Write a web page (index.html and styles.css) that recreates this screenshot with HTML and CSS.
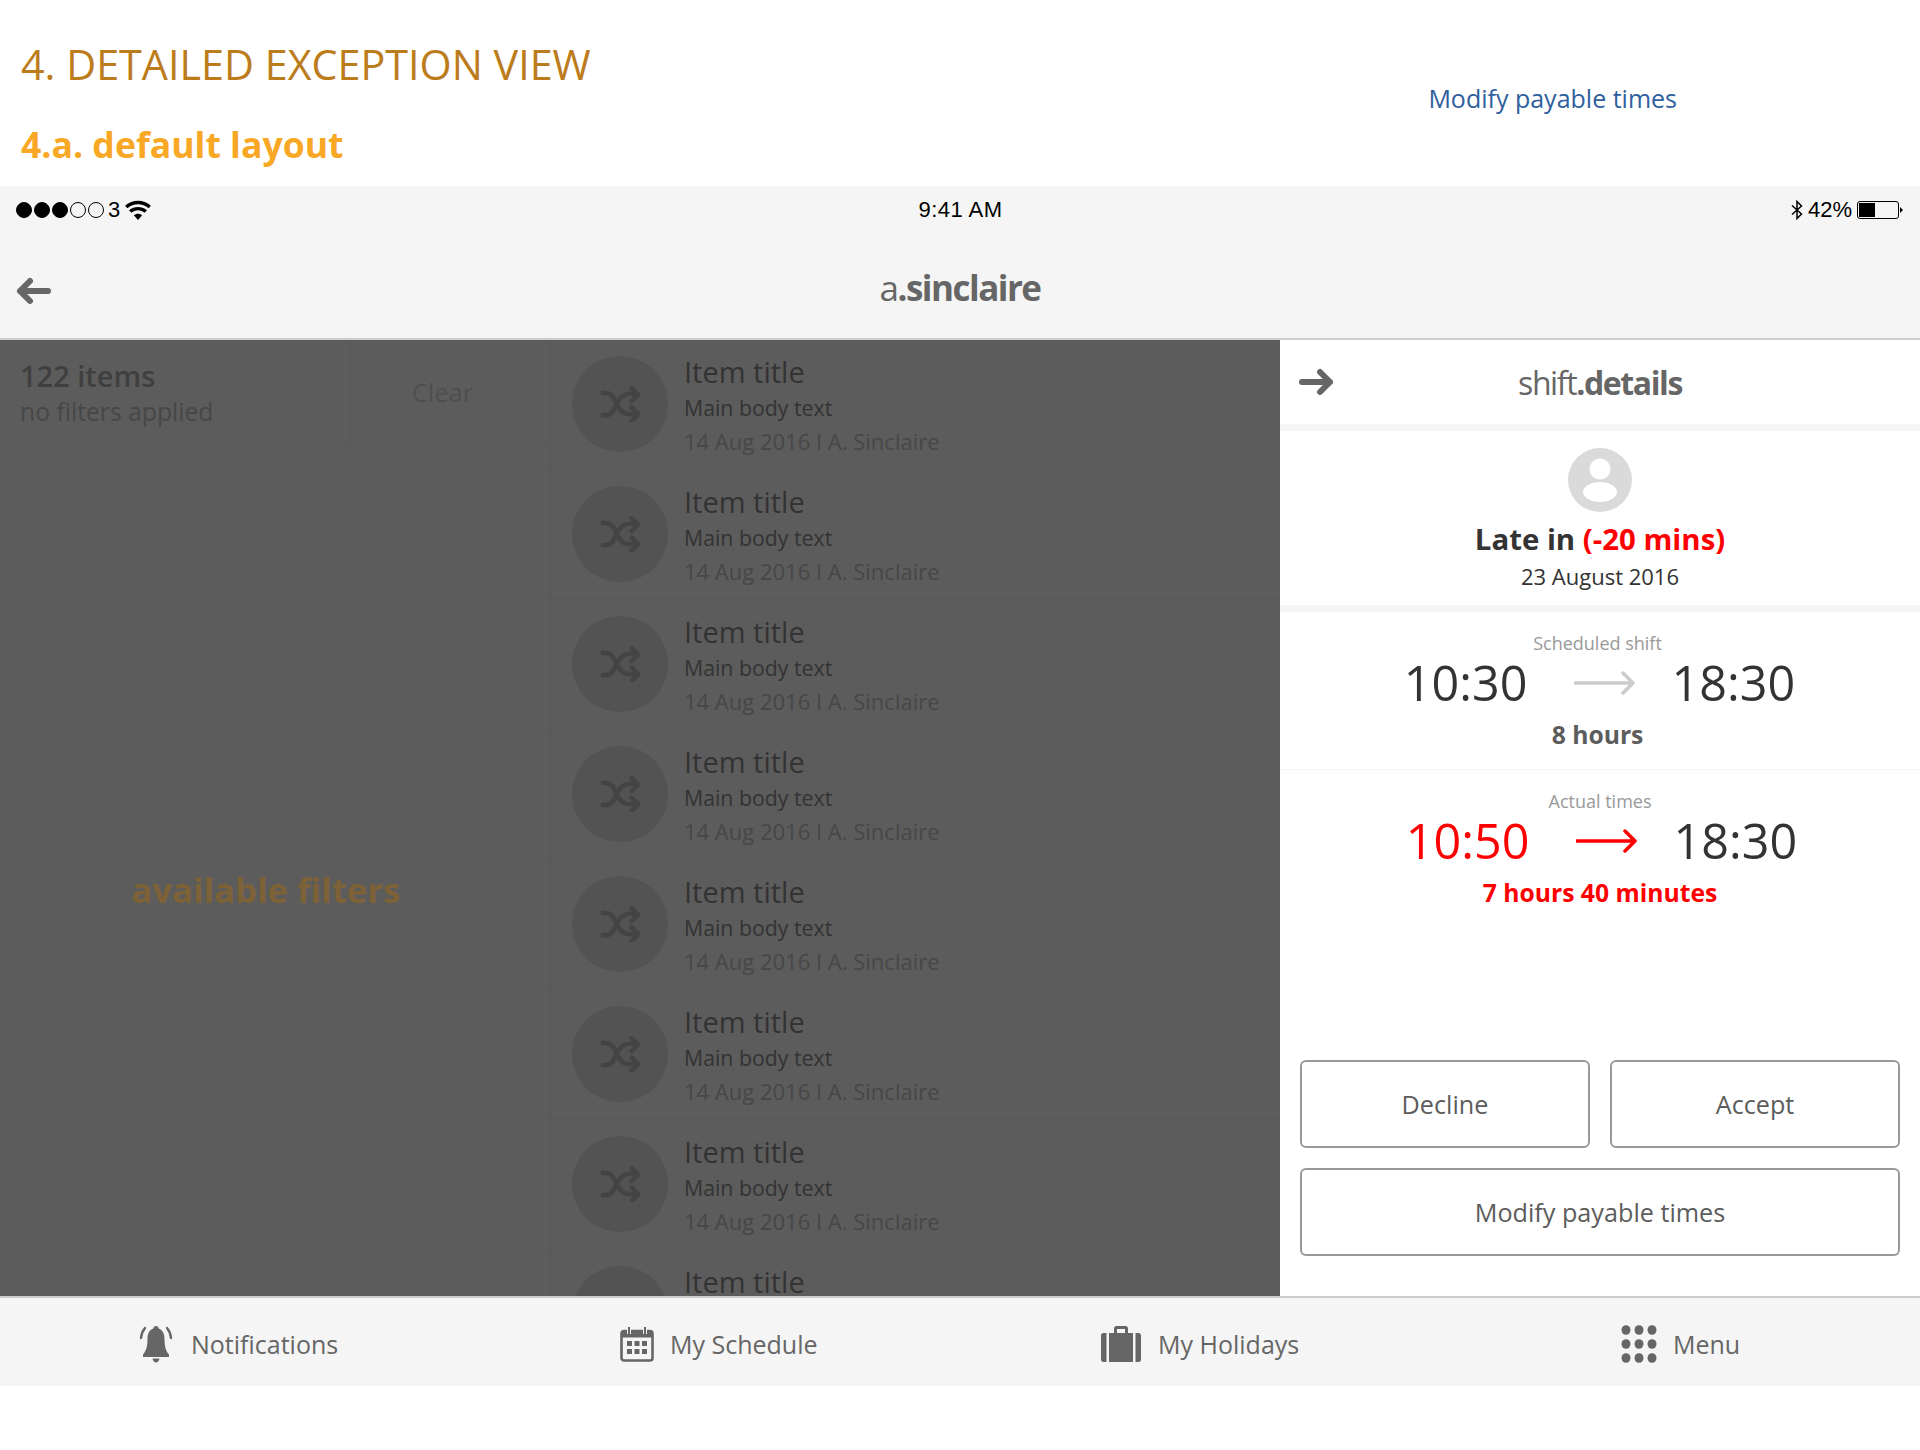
FILE: index.html
```html
<!DOCTYPE html>
<html lang="en">
<head>
  <meta charset="UTF-8" />
  <title>Detailed exception view</title>
  <link rel="stylesheet" href="styles.css">
</head>
<body>
  <header class="doc-head">
    <div class="doc-titles">
      <h1>4. DETAILED EXCEPTION VIEW</h1>
      <h2>4.a. default layout</h2>
    </div>
    <a class="doc-link">Modify payable times</a>
  </header>

  <div class="app">
    <div class="status-bar">
      <div class="status-left">
        <span class="dot on"></span><span class="dot on"></span><span class="dot on"></span><span class="dot"></span><span class="dot"></span>
        <span class="carrier">3</span>
        <svg class="wifi" width="28" height="21" viewBox="0 0 26 20"><path d="M13 19 9 14.500c2.300-2 5.700-2 8 0zM6.700 12.200 4.500 9.700c4.800-4.200 12.200-4.200 17 0l-2.200 2.500c-3.600-3.200-9-3.200-12.600 0zM2.900 7.900.7 5.400c7-6.200 17.600-6.200 24.600 0l-2.200 2.500C17.300 2.800 8.700 2.800 2.900 7.900z" fill="#000"/></svg>
      </div>
      <div class="status-time">9:41 AM</div>
      <div class="status-right">
        <svg width="12" height="20" viewBox="0 0 12 20"><path d="M1 5.500 10.500 14 6 18.500v-17L10.500 6 1 14.500" fill="none" stroke="#000" stroke-width="1.500"/></svg>
        <span>42%</span>
        <div class="battery"><div class="battery-fill"></div></div>
      </div>
    </div>

    <nav class="top-nav">
      <svg class="nav-arrow" width="36" height="28" viewBox="0 0 36 28"><path d="M32 14H4M14 4 4 14l10 10" fill="none" stroke="#666" stroke-width="6" stroke-linecap="round" stroke-linejoin="round"/></svg>
      <div class="nav-title">a<b>.sinclaire</b></div>
    </nav>

    <main class="main">
      <aside class="filters">
        <div class="filters-head">
          <div class="filters-count">
            <div class="count">122 items</div>
            <div class="applied">no filters applied</div>
          </div>
          <div class="clear">Clear</div>
        </div>
        <div class="filters-body">available filters</div>
      </aside>

      <section class="list" id="list"></section>

      <aside class="panel">
        <div class="panel-head">
          <svg class="panel-arrow" width="36" height="28" viewBox="0 0 36 28"><path d="M4 14h28M22 4l10 10-10 10" fill="none" stroke="#666" stroke-width="6" stroke-linecap="round" stroke-linejoin="round"/></svg>
          <div class="panel-title">shift<b>.details</b></div>
        </div>

        <div class="person">
          <svg width="64" height="64" viewBox="0 0 64 64"><circle cx="32" cy="32" r="32" fill="#dadada"/><circle cx="32" cy="21" r="10.500" fill="#fff"/><ellipse cx="32" cy="44" rx="17" ry="10" fill="#fff"/></svg>
          <div class="late">Late in <span class="red">(-20 mins)</span></div>
          <div class="date">23 August 2016</div>
        </div>

        <div class="times scheduled">
          <div class="times-label">Scheduled shift</div>
          <div class="times-row">
            <span>10:30</span>
            <svg width="62" height="24" viewBox="0 0 62 24"><path d="M1 12h58M49 2l10 10-10 10" fill="none" stroke="#ccc" stroke-width="3.500" stroke-linecap="round" stroke-linejoin="round"/></svg>
            <span>18:30</span>
          </div>
          <div class="times-total">8 hours</div>
        </div>

        <div class="times actual">
          <div class="times-label">Actual times</div>
          <div class="times-row">
            <span class="red">10:50</span>
            <svg width="62" height="24" viewBox="0 0 62 24"><path d="M1 12h58M49 2l10 10-10 10" fill="none" stroke="#f00" stroke-width="3.500" stroke-linecap="round" stroke-linejoin="round"/></svg>
            <span>18:30</span>
          </div>
          <div class="times-total red">7 hours 40 minutes</div>
        </div>

        <div class="actions">
          <button class="btn">Decline</button>
          <button class="btn">Accept</button>
          <button class="btn wide">Modify payable times</button>
        </div>
      </aside>
    </main>

    <footer class="tab-bar">
      <div class="tab">
        <svg width="38" height="38" viewBox="0 0 38 38"><path d="M19 1c1.500 0 2.500 1 2.700 2.500C26 5 27.500 9 27.500 14c0 8 1.500 12 4.500 15.500V32H6v-2.500C9 26 10.500 22 10.500 14c0-5 1.500-9 5.800-10.500C16.500 2 17.500 1 19 1zM15.500 33.500h7C22 36 20.500 37.500 19 37.500s-3-1.500-3.500-4z" fill="#666"/><path d="M8 3C5.500 6 4.300 9 4 13M30 3c2.500 3 3.700 6 4 10" fill="none" stroke="#666" stroke-width="2.400" stroke-linecap="round"/></svg>
        <span>Notifications</span>
      </div>
      <div class="tab">
        <svg width="34" height="36" viewBox="0 0 34 36"><rect x="1.500" y="5" width="31" height="29.500" rx="2.500" fill="none" stroke="#666" stroke-width="2.600"/><rect x="1.500" y="5" width="31" height="6.500" fill="#666"/><path d="M9 1v7M25 1v7" stroke="#f5f5f5" stroke-width="4"/><path d="M9 1v7M25 1v7" stroke="#666" stroke-width="2"/><path d="M7 15h5v5H7zM14.500 15h5v5h-5zM22 15h5v5h-5zM7 23h5v5H7zM14.500 23h5v5h-5zM22 23h5v5h-5z" fill="#666"/></svg>
        <span>My Schedule</span>
      </div>
      <div class="tab">
        <svg width="42" height="38" viewBox="0 0 42 38"><path d="M14 8V3.500C14 2 15 1 16.500 1h9C27 1 28 2 28 3.500V8h-3V4h-8v4z" fill="#666"/><path d="M9 8h24v29H9z" fill="#666"/><path d="M6.500 8v29H3.500C2 37 1 36 1 34.500v-24C1 9 2 8 3.500 8zM35.500 8h3c1.500 0 2.500 1 2.500 2.500v24c0 1.500-1 2.500-2.500 2.500h-3z" fill="#666"/></svg>
        <span>My Holidays</span>
      </div>
      <div class="tab">
        <svg width="36" height="38" viewBox="0 0 36 38"><g fill="#666"><ellipse cx="5" cy="5" rx="4.500" ry="4.800"/><ellipse cx="18" cy="5" rx="4.500" ry="4.800"/><ellipse cx="31" cy="5" rx="4.500" ry="4.800"/><ellipse cx="5" cy="19" rx="4.500" ry="4.800"/><ellipse cx="18" cy="19" rx="4.500" ry="4.800"/><ellipse cx="31" cy="19" rx="4.500" ry="4.800"/><ellipse cx="5" cy="33" rx="4.500" ry="4.800"/><ellipse cx="18" cy="33" rx="4.500" ry="4.800"/><ellipse cx="31" cy="33" rx="4.500" ry="4.800"/></g></svg>
        <span>Menu</span>
      </div>
    </footer>
  </div>

  <script>
    const list = document.getElementById("list");
    const shuffle = '<svg width="41" height="36" viewBox="0 0 44 38"><path d="M3 7h2c7 0 10 5 13 12s7 11 14 11h7M3 31h2c7 0 10-5 13-12s7-11 14-11h7" fill="none" stroke="#444" stroke-width="5" stroke-linecap="round"/><path d="M34 2l7 7-7 7M34 23l7 7-7 7" fill="none" stroke="#444" stroke-width="5" stroke-linecap="round" stroke-linejoin="round"/></svg>';
    for (let i = 0; i < 8; i++) {
      const row = document.createElement("div");
      row.className = "row";
      // the last row runs under the tab bar, only its title shows
      const rest = i < 7
        ? '<div class="row-body">Main body text</div><div class="row-meta">14 Aug 2016 I A. Sinclaire</div>'
        : '';
      row.innerHTML =
        '<div class="row-icon">' + shuffle + '</div>' +
        '<div class="row-text"><div class="row-title">Item title</div>' + rest + '</div>';
      list.appendChild(row);
    }
  </script>
</body>
</html>
```

FILE: styles.css
```css
* {
  box-sizing: border-box;
}
html, body {
  margin: 0;
  height: 1450px;
  overflow: hidden;
}
body {
  font-family: "Open Sans", "Noto Sans", sans-serif;
  background: #fff;
  color: #333;
}

.doc-head {
  height: 186px;
  display: flex;
  justify-content: space-between;
}
.doc-titles {
  padding: 36px 0 0 21px;
}
.doc-head h1 {
  margin: 0;
  font-size: 41.300px;
  font-weight: 400;
  line-height: 56px;
  color: #bc7c1c;
}
.doc-head h2 {
  margin: 29px 0 0;
  font-size: 35.600px;
  font-weight: 700;
  line-height: 46px;
  color: #f9a825;
}
.doc-link {
  margin: 80px 243px 0 0;
  font-size: 25px;
  line-height: 36px;
  color: #2f5f9e;
}

.status-bar {
  height: 48px;
  background: #f5f5f5;
  display: grid;
  grid-template-columns: 1fr auto 1fr;
  align-items: center;
  padding: 0 21px 0 16px;
  font-family: "Liberation Sans", sans-serif;
  font-size: 22px;
  color: #000;
}
.status-left {
  display: flex;
  align-items: center;
  gap: 2px;
}
.dot {
  width: 16px;
  height: 16px;
  border-radius: 50%;
  border: 1px solid #000;
}
.dot.on {
  background: #000;
}
.carrier {
  margin: 0 2px;
}
.status-time {
  letter-spacing: 0.500px;
  transform: translateX(3px);
}
.status-right {
  display: flex;
  align-items: center;
  justify-content: flex-end;
  gap: 5px;
}
.battery {
  width: 42px;
  height: 18px;
  border: 1px solid #000;
  border-radius: 3px;
  padding: 1px;
  position: relative;
}
.battery::after {
  content: "";
  position: absolute;
  right: -5px;
  top: 5px;
  border-left: 3px solid #000;
  border-top: 3px solid transparent;
  border-bottom: 3px solid transparent;
}
.battery-fill {
  width: 42%;
  height: 100%;
  background: #000;
}

.top-nav {
  height: 106px;
  background: #f5f5f5;
  border-bottom: 2px solid #ccc;
  padding-top: 2px;
  display: flex;
  align-items: center;
  justify-content: center;
  position: relative;
}
.nav-arrow {
  position: absolute;
  left: 16px;
  top: 43px;
}
.nav-title {
  font-size: 35px;
  letter-spacing: -1.500px;
  color: #666;
}
.panel-title {
  font-size: 32px;
  letter-spacing: -1.400px;
  color: #666;
}

.main {
  height: 956px;
  display: flex;
  background: #5c5c5c;
  overflow: hidden;
}
.filters {
  width: 551px;
  display: flex;
  flex-direction: column;
  border-right: 1px solid #585858;
}
.filters-head {
  height: 105px;
  display: flex;
  border-bottom: 1px solid #585858;
  padding-left: 20px;
}
.filters-count {
  width: 331px;
  padding-top: 17px;
  border-right: 1px solid #585858;
}
.count {
  font-size: 29px;
  font-weight: 600;
  line-height: 38px;
  color: #3f3f3f;
}
.applied {
  font-size: 24.700px;
  line-height: 34px;
  color: #474747;
}
.clear {
  flex: 1;
  text-align: center;
  padding: 35px 16px 0 0;
  font-size: 25.500px;
  line-height: 35px;
  color: #4f4f4f;
}
.filters-body {
  flex: 1;
  display: flex;
  align-items: center;
  justify-content: center;
  padding: 38px 18px 0 0;
  font-size: 34.700px;
  font-weight: 700;
  color: #7d6238;
}

.list {
  width: 729px;
}
.row {
  height: 130px;
  display: flex;
  align-items: flex-start;
  gap: 16px;
  padding: 16px 0 0 21px;
  border-bottom: 1px solid #585858;
}
.row-icon {
  width: 96px;
  height: 96px;
  border-radius: 50%;
  background: #535353;
  display: flex;
  align-items: center;
  justify-content: center;
  flex-shrink: 0;
}
.row-text {
  margin-top: -4px;
}
.row-title {
  font-size: 29px;
  line-height: 40px;
  color: #333;
}
.row:last-child .row-text {
  margin-top: 2px;
}
.row:last-child .row-title {
  line-height: 28px;
}
.row-body {
  font-size: 21.300px;
  line-height: 32px;
  color: #333;
}
.row-meta {
  font-size: 22px;
  line-height: 34px;
  color: #474747;
}

.panel {
  width: 640px;
  background: #f5f5f5;
  display: flex;
  flex-direction: column;
}
.panel-head {
  height: 84px;
  background: #fff;
  display: flex;
  align-items: center;
  justify-content: center;
  position: relative;
  margin-bottom: 7px;
}
.panel-arrow {
  position: absolute;
  left: 18px;
  top: 28px;
}
.person {
  height: 174px;
  background: #fff;
  display: flex;
  flex-direction: column;
  align-items: center;
  padding-top: 17px;
  margin-bottom: 7px;
}
.late {
  font-size: 29.400px;
  font-weight: 700;
  line-height: 40px;
  margin-top: 7px;
  color: #333;
}
.date {
  font-size: 22px;
  line-height: 34px;
}
.red {
  color: #f00;
}
.times {
  background: #fff;
  text-align: center;
}
.scheduled {
  height: 157px;
  padding: 18px 5px 0 0;
  margin-bottom: 1px;
}
.scheduled .times-row {
  padding-left: 4px;
}
.actual {
  flex: 1;
  padding-top: 18px;
}
.actual .times-row {
  padding-left: 3px;
}
.times-label {
  font-size: 18px;
  line-height: 26px;
  color: #999;
}
.times-row {
  display: flex;
  align-items: center;
  justify-content: center;
  font-size: 48.500px;
  line-height: 52px;
  color: #333;
}
.times-row svg {
  margin: 2px 36px 0 46px;
}
.times-total {
  margin-top: 9px;
  font-size: 24.700px;
  font-weight: 700;
  line-height: 36px;
  color: #5c5c5c;
}
.times-total.red {
  color: #f00;
}
.actions {
  background: #fff;
  display: grid;
  grid-template-columns: 1fr 1fr;
  gap: 20px;
  padding: 0 20px 40px;
}
.btn {
  height: 88px;
  background: #fff;
  border: 2px solid #999;
  border-radius: 6px;
  font-family: inherit;
  font-size: 25.200px;
  color: #5c5c5c;
}
.btn.wide {
  grid-column: 1 / 3;
}

.tab-bar {
  height: 90px;
  background: #f5f5f5;
  border-top: 2px solid #ccc;
  padding-top: 4px;
  display: grid;
  grid-template-columns: 483px 480px 521px 436px;
  align-items: center;
}
.tab {
  display: flex;
  align-items: center;
  gap: 16px;
  padding-left: 137px;
  font-size: 25px;
  color: #666;
}
```
